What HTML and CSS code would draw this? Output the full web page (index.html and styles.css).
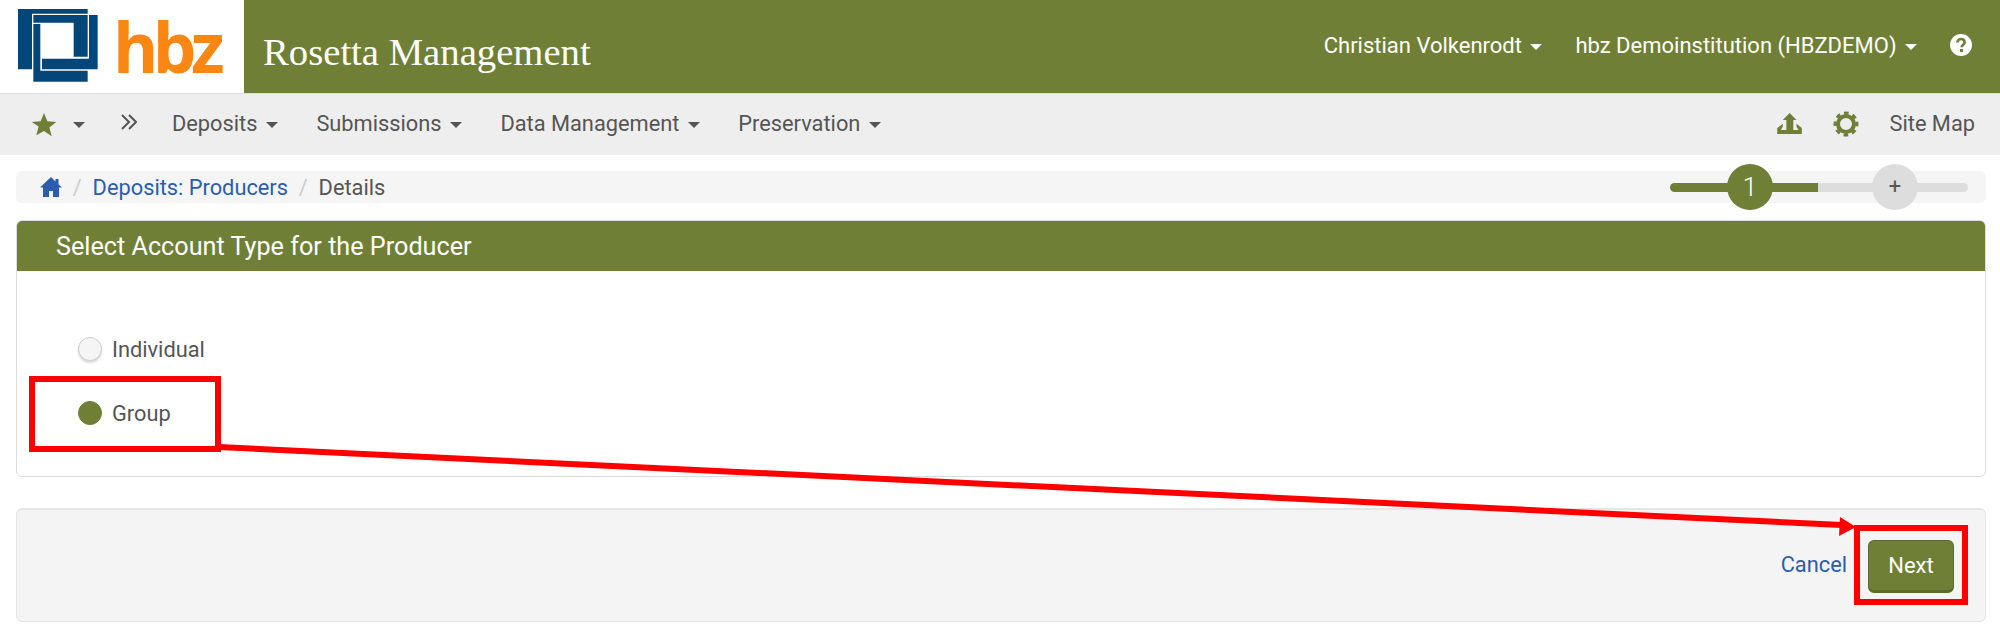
FILE: index.html
```html
<!DOCTYPE html>
<html lang="en">
<head>
  <meta charset="UTF-8" />
  <title>Rosetta Management</title>
  <link rel="stylesheet" href="styles.css">
</head>
<body>
  <header class="topbar">
    <div class="logo">
      <svg class="logo-mark" viewBox="23 27 240 219" width="80" height="73">
        <path fill="#03467a" d="M23 27H232V41H65V208H23z"/>
        <path fill="#03467a" d="M69 45H232V170H190V68H69z"/>
        <path fill="#03467a" d="M236 45H262V208H95V176H236z"/>
        <path fill="#03467a" d="M69 72H90V212H232V245H69z"/>
      </svg>
      <span class="logo-text">hbz</span>
    </div>
    <div class="brand-bar">
      <span class="app-title">Rosetta Management</span>
      <div class="user-menu">
        <span class="user-item">Christian Volkenrodt <i class="caret"></i></span>
        <span class="user-item">hbz Demoinstitution (HBZDEMO) <i class="caret"></i></span>
        <svg class="help" viewBox="0 0 22 22" width="22" height="22">
          <circle cx="11" cy="11" r="11" fill="#fff"/>
          <path d="M7.500 8.500c0-2.300 1.600-3.500 3.600-3.500s3.500 1.200 3.500 3.200c0 2.800-3 2.600-3 5" fill="none" stroke="#6f7f36" stroke-width="2.600"/>
          <rect x="10" y="15" width="3" height="3" fill="#6f7f36"/>
        </svg>
      </div>
    </div>
  </header>

  <nav class="mainnav">
    <svg class="star" viewBox="0 0 26 26" width="26" height="26">
      <path fill="#6f7f36" d="M13 1l3.400 8.300 8.900.6-6.900 5.700 2.300 8.700L13 19l-7.700 4.300 2.300-8.700L.7 9.900l8.900-.6z"/>
    </svg>
    <i class="caret star-caret"></i>
    <svg class="chevrons" viewBox="0 0 16 16" width="16" height="16">
      <path d="M1 1l7 7-7 7M8 1l7 7-7 7" fill="none" stroke="#555" stroke-width="2"/>
    </svg>
    <a class="nav-item">Deposits <i class="caret"></i></a>
    <a class="nav-item">Submissions <i class="caret"></i></a>
    <a class="nav-item">Data Management <i class="caret"></i></a>
    <a class="nav-item">Preservation <i class="caret"></i></a>
    <div class="nav-right">
      <svg viewBox="47 52 75 64" width="25" height="21">
        <path fill="#6f7f36" d="M85 52L106 73H96V104H75V73H64z"/>
        <path fill="#6f7f36" d="M47 116V98L64 85V94L58 104H112L106 94V85L122 98V116z"/>
      </svg>
      <svg viewBox="0 0 26 26" width="26" height="26">
        <circle cx="13" cy="13" r="8" fill="none" stroke="#6f7f36" stroke-width="4"/>
        <circle cx="13" cy="13" r="11" fill="none" stroke="#6f7f36" stroke-width="3" stroke-dasharray="4.600 4.040" transform="rotate(-12 13 13)"/>
      </svg>
      <a class="nav-link">Site Map</a>
    </div>
  </nav>

  <main class="content">
    <div class="breadcrumb">
      <svg viewBox="0 0 22 20" width="22" height="20">
        <path fill="#2a5db0" d="M11 0L0 10.500h3V20h6v-6h4v6h6v-9.500h3l-3.500-3.300V2h-3v2.400z"/>
      </svg>
      <span class="sep">/</span>
      <a class="crumb-link">Deposits: Producers</a>
      <span class="sep">/</span>
      <span class="crumb-current">Details</span>
      <div class="stepper">
        <span class="step step-done">1</span>
        <span class="step step-add">+</span>
      </div>
    </div>

    <section class="panel">
      <h2 class="panel-head">Select Account Type for the Producer</h2>
      <div class="panel-body">
        <label class="radio-row"><span class="radio"></span>Individual</label>
        <label class="radio-row"><span class="radio radio-on"></span>Group</label>
      </div>
    </section>

    <div class="actions">
      <a class="cancel">Cancel</a>
      <button class="btn-next">Next</button>
    </div>
  </main>

  <svg class="annotations" viewBox="0 0 2000 633" width="2000" height="633">
    <rect x="32" y="379" width="186" height="70" fill="none" stroke="#fe0000" stroke-width="6"/>
    <rect x="1857" y="528" width="108" height="74" fill="none" stroke="#fe0000" stroke-width="6"/>
    <path d="M219 447L1842 525" fill="none" stroke="#fe0000" stroke-width="6"/>
    <path d="M1840 517L1856 527L1839 536z" fill="#fe0000"/>
  </svg>
</body>
</html>
```

FILE: styles.css
```css
body {
  margin: 0;
  font-family: 'Roboto', sans-serif;
  font-size: 21.800px;
  color: #555;
  background-color: #fff;
  height: 633px;
  overflow: hidden;
  position: relative;
}

.topbar {
  display: flex;
  height: 93px;
}

.logo {
  width: 244px;
  display: flex;
  align-items: flex-start;
  padding: 9px 0 0 18px;
  box-sizing: border-box;
}

.logo-text {
  font-family: 'Open Sans', sans-serif;
  font-weight: 700;
  font-size: 69px;
  line-height: 74px;
  letter-spacing: -5.500px;
  color: #fb8712;
  margin-left: 15px;
}

.brand-bar {
  flex: 1;
  display: flex;
  align-items: center;
  background-color: #6f7f36;
  color: #fff;
  padding-left: 19px;
  padding-right: 28px;
}

.app-title {
  font-family: 'Liberation Serif', serif;
  font-size: 38.700px;
  margin-top: 10px;
}

.user-menu {
  margin-left: auto;
  display: flex;
  align-items: center;
  gap: 33px;
  margin-bottom: 3px;
}

.user-item {
  font-size: 22px;
}

.caret {
  display: inline-block;
  width: 0;
  height: 0;
  margin-left: 3px;
  vertical-align: middle;
  border-top: 6px solid currentColor;
  border-left: 6px solid transparent;
  border-right: 6px solid transparent;
}

.mainnav {
  height: 62px;
  background-color: #eee;
  border-top: 1px solid #ddd;
  box-sizing: border-box;
  display: flex;
  align-items: center;
  padding: 0 25px 0 31px;
}

.star-caret {
  margin-left: 16px;
}

.chevrons {
  margin-left: 36px;
  margin-right: 35px;
  margin-bottom: 6px;
}

.nav-item {
  margin-right: 38.500px;
  margin-bottom: 2px;
}

.nav-right {
  margin-left: auto;
  display: flex;
  align-items: center;
  gap: 31px;
  margin-bottom: 2px;
}

.content {
  padding: 16px 14px 0 16px;
}

.breadcrumb {
  height: 32px;
  background-color: #f5f5f5;
  border-radius: 6px;
  display: flex;
  align-items: center;
  padding: 0 18px 0 24px;
}

.sep {
  color: #ccc;
  margin: 0 10.800px;
}

.crumb-link {
  color: #2a5db0;
}

.stepper {
  margin-left: auto;
  width: 298px;
  height: 9px;
  border-radius: 5px;
  position: relative;
  background: linear-gradient(to right, #6f7f36 148px, #ddd 148px);
}

.step {
  position: absolute;
  top: -19px;
  width: 46px;
  height: 46px;
  border-radius: 50%;
  display: flex;
  align-items: center;
  justify-content: center;
}

.step-done {
  left: 57px;
  background-color: #6f7f36;
  color: #fff;
  font-size: 26px;
  font-weight: 300;
}

.step-add {
  left: 202px;
  background-color: #ddd;
  color: #555;
}

.panel {
  margin-top: 17px;
  border: 1px solid #ddd;
  border-radius: 6px;
  overflow: hidden;
  height: 257px;
  box-sizing: border-box;
}

.panel-head {
  margin: 0;
  height: 51px;
  background-color: #6f7f36;
  color: #fff;
  font-size: 25.200px;
  font-weight: 400;
  line-height: 53px;
  padding-left: 39px;
  margin-top: -1px;
}

.panel-body {
  padding: 66px 0 0 61px;
  display: flex;
  flex-direction: column;
  gap: 40px;
}

.radio-row {
  display: flex;
  align-items: center;
  gap: 10px;
  height: 24px;
}

.radio {
  width: 24px;
  height: 24px;
  border-radius: 50%;
  box-sizing: border-box;
  border: 1px solid #ccc;
  background-color: #f5f5f5;
  box-shadow: 0 2px 2px rgba(0, 0, 0, 0.15);
}

.radio-on {
  background-color: #6f7f36;
  border-color: #6f7f36;
  box-shadow: none;
}

.actions {
  margin-top: 31px;
  height: 114px;
  box-sizing: border-box;
  background-color: #f4f4f4;
  border: 1px solid #e6e6e6;
  border-top-width: 2px;
  border-radius: 6px;
  display: flex;
  align-items: center;
  justify-content: flex-end;
  padding: 0 31px 0 0;
  gap: 21px;
}

.cancel {
  color: #2a5db0;
  margin-bottom: 2px;
}

.btn-next {
  width: 86px;
  height: 53px;
  margin-top: 2px;
  border: 1px solid #5c6a2b;
  border-bottom-width: 3px;
  border-radius: 6px;
  background-color: #6f7f36;
  color: #fff;
  font-family: inherit;
  font-size: 22px;
}

.annotations {
  position: absolute;
  top: 0;
  left: 0;
  pointer-events: none;
}
```
